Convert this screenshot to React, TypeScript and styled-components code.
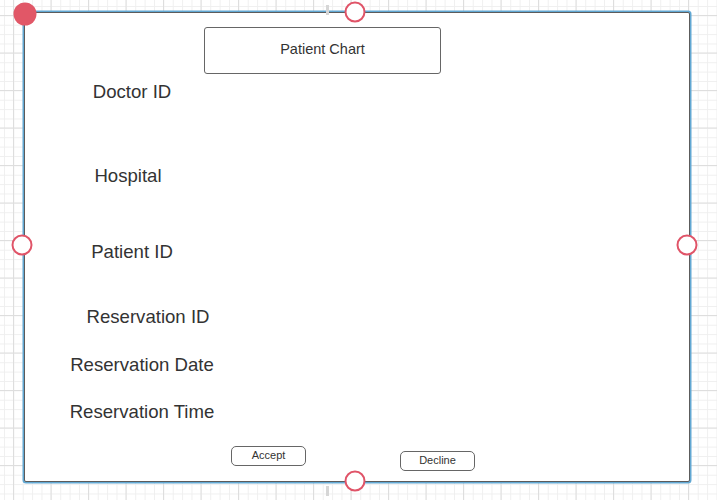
import React from 'react';
import styled, { createGlobalStyle } from 'styled-components';

const GlobalStyle = createGlobalStyle`
  html, body {
    margin: 0;
    padding: 0;
  }
  body {
    width: 717px;
    height: 500px;
    overflow: hidden;
    font-family: "Liberation Sans", Arial, sans-serif;
    background-color: #ffffff;
    background-image:
      linear-gradient(to right, #dedede 1px, transparent 1px),
      linear-gradient(to bottom, #dedede 1px, transparent 1px),
      linear-gradient(to right, #efefef 1px, transparent 1px),
      linear-gradient(to bottom, #efefef 1px, transparent 1px);
    background-size: 37.5px 37.5px, 37.5px 37.5px, 9.375px 9.375px, 9.375px 9.375px;
    background-position: 13px 0, 0 15px, 4px 0, 0 6px;
  }
`;

const Canvas = styled.div`
  position: relative;
  width: 717px;
  height: 500px;
  padding: 12px 27px 18px 24px;
  box-sizing: border-box;
`;

// the selected shape: dark stroke plus the blue selection outline
const Frame = styled.div`
  width: 100%;
  height: 100%;
  box-sizing: border-box;
  background: #ffffff;
  border: 1px solid #5c5c5c;
  border-radius: 2px;
  box-shadow: 0 0 0 1.5px #62a8d3;
  display: flex;
  flex-direction: column;
  align-items: flex-start;
`;

const TopRow = styled.div`
  padding: 14px 0 0 179px;
`;

const TitleBox = styled.div`
  width: 237px;
  height: 47px;
  box-sizing: border-box;
  border: 1px solid #666;
  border-radius: 3px;
  display: flex;
  align-items: center;
  justify-content: center;
  font-size: 14.5px;
  color: #333;
  padding-bottom: 3px;
`;

const LabelList = styled.div`
  display: flex;
  flex-direction: column;
  align-items: flex-start;
`;

const Label = styled.div<{ $center: number; $space: number }>`
  width: ${({ $center }) => $center * 2}px;
  margin-top: ${({ $space }) => $space}px;
  text-align: center;
  white-space: nowrap;
  font-size: 18.6px;
  line-height: 22px;
  color: #333;
`;

const ButtonRow = styled.div`
  display: flex;
  align-items: flex-start;
  gap: 94px;
  padding: 23px 0 0 206px;
`;

const SmallButton = styled.div<{ $drop?: number }>`
  width: 75px;
  height: 20px;
  margin-top: ${({ $drop }) => $drop ?? 0}px;
  box-sizing: border-box;
  border: 1px solid #666;
  border-radius: 5px;
  display: flex;
  align-items: center;
  justify-content: center;
  font-size: 11px;
  color: #333;
  padding-bottom: 3px;
`;

const Handle = styled.div<{ $x: number; $y: number; $filled?: boolean }>`
  position: absolute;
  left: ${({ $x }) => $x}px;
  top: ${({ $y }) => $y}px;
  width: ${({ $filled }) => ($filled ? '23px' : '21px')};
  height: ${({ $filled }) => ($filled ? '23px' : '21px')};
  box-sizing: border-box;
  border-radius: 50%;
  transform: translate(-50%, -50%);
  background: ${({ $filled }) => ($filled ? '#e15767' : '#ffffff')};
  border: ${({ $filled }) => ($filled ? 'none' : '2px solid #e05468')};
`;

// faint alignment guide drawn by the editor over the canvas
const Guide = styled.div<{ $y: number }>`
  position: absolute;
  left: 326px;
  top: ${({ $y }) => $y}px;
  width: 3px;
  height: 10px;
  background: #d6d6d6;
`;

const labels = [
  { text: 'Doctor ID', center: 107, space: 7 },
  { text: 'Hospital', center: 103, space: 62 },
  { text: 'Patient ID', center: 107, space: 54 },
  { text: 'Reservation ID', center: 123, space: 43 },
  { text: 'Reservation Date', center: 117, space: 26 },
  { text: 'Reservation Time', center: 117, space: 25 },
];

const handles = [
  { x: 355, y: 12 },
  { x: 22, y: 245 },
  { x: 687, y: 245 },
  { x: 355, y: 481 },
];

const App: React.FC = () => {
  return (
    <>
      <GlobalStyle />
      <Canvas>
        <Frame>
          <TopRow>
            <TitleBox>Patient Chart</TitleBox>
          </TopRow>
          <LabelList>
            {labels.map((l) => (
              <Label key={l.text} $center={l.center} $space={l.space}>
                {l.text}
              </Label>
            ))}
          </LabelList>
          <ButtonRow>
            <SmallButton>Accept</SmallButton>
            <SmallButton $drop={5}>Decline</SmallButton>
          </ButtonRow>
        </Frame>
        <Guide $y={5} />
        <Guide $y={486} />
        <Handle $filled $x={25} $y={14} />
        {handles.map((h) => (
          <Handle key={`${h.x}-${h.y}`} $x={h.x} $y={h.y} />
        ))}
      </Canvas>
    </>
  );
};

export default App;
